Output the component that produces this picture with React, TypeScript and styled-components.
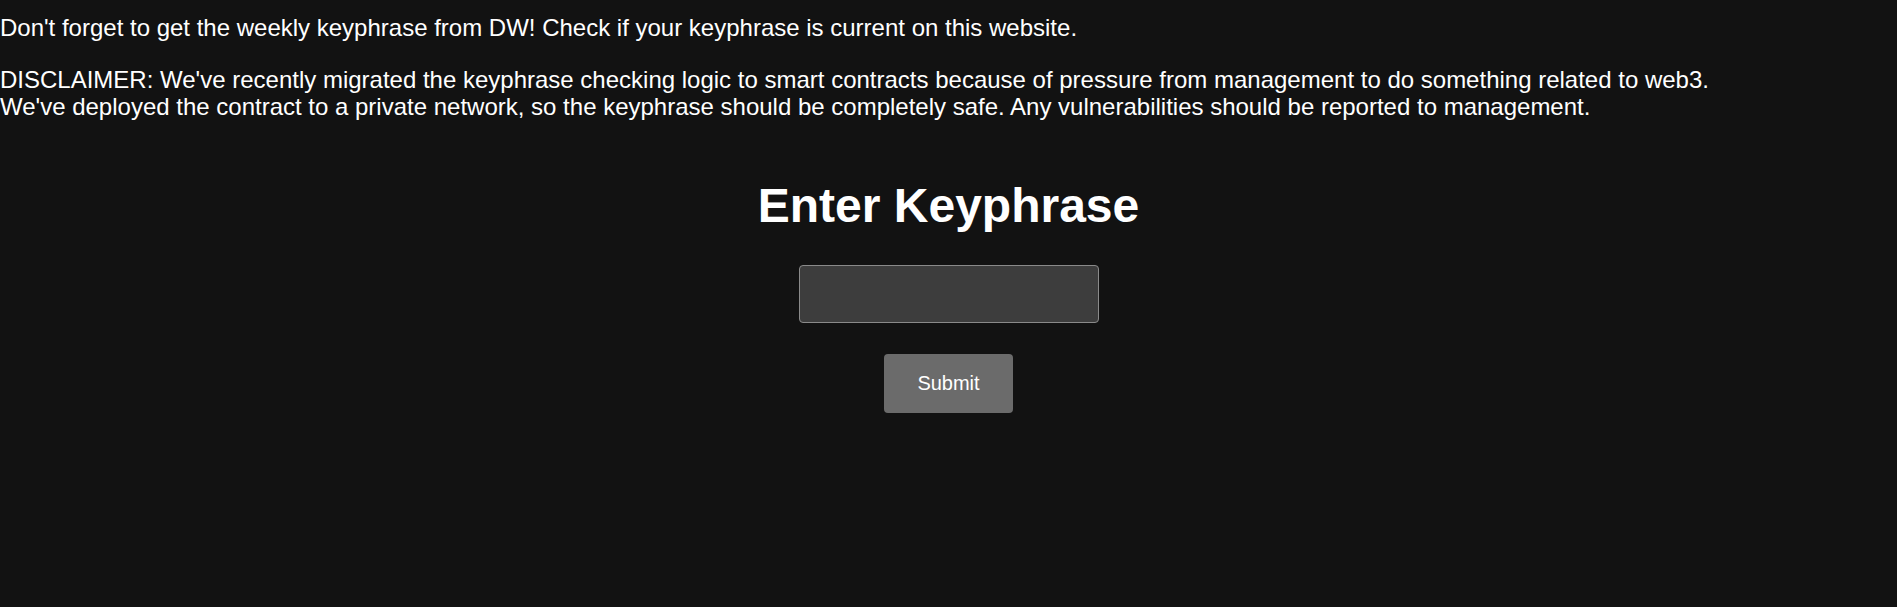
import React from "react";
import styled, { createGlobalStyle } from "styled-components";

const GlobalStyle = createGlobalStyle`
  html, body {
    margin: 0;
    padding: 0;
    background: #121212;
  }
  body {
    font-family: "Liberation Sans", Arial, sans-serif;
    color: #ffffff;
    min-height: 607px;
  }
`;

const Page = styled.div`
  display: flex;
  flex-direction: column;
  padding-top: 14px;
`;

const Notice = styled.p`
  margin: 0 0 25px 0;
  font-size: 24px;
  line-height: 27px;
`;

const Form = styled.form`
  display: flex;
  flex-direction: column;
  align-items: center;
  margin-top: 33px;
`;

const Title = styled.h1`
  margin: 0 0 32px 0;
  font-size: 48px;
  font-weight: 700;
  line-height: 55px;
`;

const KeyInput = styled.input`
  box-sizing: border-box;
  width: 300px;
  height: 58px;
  background: #3d3d3d;
  border: 1.5px solid #8a8a8a;
  border-radius: 4px;
  color: #fff;
  font-family: inherit;
  font-size: 20px;
  padding: 0 12px;
  outline: none;
`;

const SubmitButton = styled.button`
  box-sizing: border-box;
  margin-top: 31px;
  width: 129px;
  height: 59px;
  background: #6b6b6b;
  border: none;
  border-radius: 4px;
  color: #fff;
  font-family: inherit;
  font-size: 20px;
  cursor: pointer;
`;

export default function App() {
  return (
    <>
      <GlobalStyle />
      <Page>
        <Notice>
          Don't forget to get the weekly keyphrase from DW! Check if your keyphrase is current on this website.
        </Notice>
        <Notice>
          DISCLAIMER: We've recently migrated the keyphrase checking logic to smart contracts because of pressure from management to do something related to web3.
          <br />
          We've deployed the contract to a private network, so the keyphrase should be completely safe. Any vulnerabilities should be reported to management.
        </Notice>
        <Form onSubmit={(e) => e.preventDefault()}>
          <Title>Enter Keyphrase</Title>
          <KeyInput type="text" />
          <SubmitButton type="submit">Submit</SubmitButton>
        </Form>
      </Page>
    </>
  );
}
